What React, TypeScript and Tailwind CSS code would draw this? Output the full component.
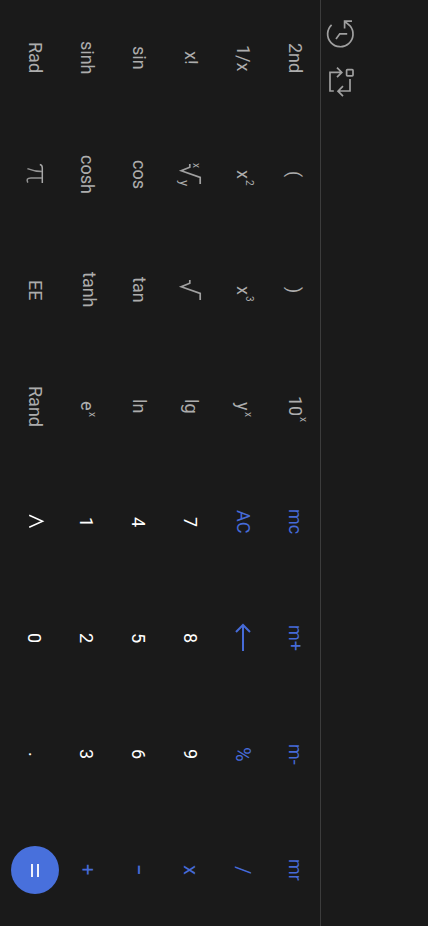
import type { ReactNode } from 'react';

type Tone = 'fn' | 'num' | 'op';

interface KeyDef {
  id: string;
  tone: Tone;
  face: ReactNode;
}

const tones: Record<Tone, string> = {
  fn: 'text-[#adadad]',
  num: 'text-white',
  op: 'text-[#466bd8]',
};

const sideways = 'block whitespace-nowrap [writing-mode:vertical-rl] [text-orientation:sideways]';

function Label({ children, className = 'mr-px text-[18px] leading-6' }: { children: ReactNode; className?: string }) {
  return <span className={`${sideways} ${className}`}>{children}</span>;
}

function Power({ base, exp, place }: { base: string; exp: string; place: string }) {
  return (
    <span className="relative block">
      <Label>{base}</Label>
      <Label className={`absolute top-full text-[10px] leading-[10px] ${place}`}>{exp}</Label>
    </span>
  );
}

function RootMark() {
  return (
    <svg width="52" height="40" viewBox="0 0 52 40" fill="none" stroke="#a0a0a0" strokeWidth="1.7">
      <path d="M24.8 10V13.2L16.2 16.8L35.2 23.4V30" />
    </svg>
  );
}

function Root() {
  return (
    <span className="relative block">
      <RootMark />
      <Label className="absolute left-[26px] top-[9px] text-[10px] leading-[10px]">x</Label>
      <Label className="absolute left-[13px] top-[25.5px] text-[13px] leading-[13px]">y</Label>
    </span>
  );
}

function Pi() {
  return (
    <svg width="52" height="40" viewBox="0 0 52 40" fill="none" strokeWidth="1.5">
      <path d="M30.8 10.6Q33.3 11 33.3 14V29" stroke="#a8a8a8" />
      <path d="M33 17.6C28 17.6 24 16.8 18.4 14.6M33 24H22C18 24 17.4 25.6 18.8 28.6" stroke="#949494" />
    </svg>
  );
}

function Backspace() {
  return (
    <svg width="52" height="40" viewBox="0 0 52 40" fill="none" stroke="#466bd8" strokeWidth="2">
      <path d="M26 33V7M19 14L26 7L33 14" />
    </svg>
  );
}

function Caret() {
  return (
    <svg width="52" height="20" viewBox="0 0 52 20" fill="none" stroke="#fff" strokeWidth="1.5">
      <path d="M20.2 3.2L33.6 9.2L20.2 15.2" />
    </svg>
  );
}

function Equals() {
  return (
    <span className="flex h-12 w-12 items-center justify-center gap-[4px] rounded-full bg-[#4870dc]">
      <span className="h-[13px] w-[2px] bg-[#eef1fb]" />
      <span className="h-[13px] w-[2px] bg-[#eef1fb]" />
    </span>
  );
}

const fn = (s: string, className?: string): KeyDef => ({
  id: s,
  tone: 'fn',
  face: <Label className={className}>{s}</Label>,
});
const num = (s: string, className = 'mr-[2px] text-[18px] leading-6'): KeyDef => ({
  id: s,
  tone: 'num',
  face: <Label className={className}>{s}</Label>,
});
const op = (s: string): KeyDef => ({ id: s, tone: 'op', face: <Label>{s}</Label> });
const sign = (s: string, className = 'text-[20px] leading-6'): KeyDef => ({
  id: `sign ${s}`,
  tone: 'op',
  face: <Label className={className}>{s}</Label>,
});
const pow = (base: string, exp: string, place: string): KeyDef => ({
  id: `${base}^${exp}`,
  tone: 'fn',
  face: <Power base={base} exp={exp} place={place} />,
});

const paren = 'mr-[3px] text-[18px] leading-6';

const keys: KeyDef[] = [
  fn('Rad'), fn('sinh'), fn('sin'), fn('x!'), fn('1/x'), fn('2nd'),
  { id: 'pi', tone: 'fn', face: <Pi /> },
  fn('cosh'), fn('cos'),
  { id: 'root', tone: 'fn', face: <Root /> },
  pow('x', '2', 'left-[13px] mt-[1.5px]'), fn('(', paren),
  fn('EE'), fn('tanh', 'ml-[3px] text-[18px] leading-6'), fn('tan'),
  { id: 'sqrt', tone: 'fn', face: <RootMark /> },
  pow('x', '3', 'left-[13px] mt-[1.5px]'), fn(')', paren),
  fn('Rand'), pow('e', 'x', 'left-[12px] mt-[1px]'), fn('ln'), fn('lg'),
  pow('y', 'x', 'left-[12.5px] mt-[1.5px]'), pow('10', 'x', 'left-[15px] mt-[1px]'),
  { id: 'more', tone: 'num', face: <Caret /> },
  num('1'), num('4'), num('7'), op('AC'), op('mc'),
  num('0'), num('2'), num('5'), num('8'),
  { id: 'back', tone: 'op', face: <Backspace /> },
  op('m+'),
  num('.', 'text-[18px] leading-6'), num('3'), num('6'), num('9'), sign('%'), op('m-'),
  { id: 'eq', tone: 'num', face: <Equals /> },
  sign('+', 'ml-[2px] text-[20px] leading-6'),
  sign('−', 'mr-px text-[20px] font-medium leading-6'),
  sign('x', 'mr-px text-[20px] leading-6'),
  sign('/'), op('mr'),
];

function HistoryIcon() {
  return (
    <svg width="32" height="32" viewBox="0 0 32 32" fill="none" stroke="#a0a0a0" strokeWidth="1.7">
      <path d="M7.6 6.8A12.7 12.7 0 1 0 26 7.8L20.8 3.4M20.6 10.5V3.2H28M12 21L15.8 15.8H23.2" />
    </svg>
  );
}

function RotateIcon() {
  return (
    <svg width="32" height="32" viewBox="0 0 32 32" fill="none" stroke="#a0a0a0" strokeWidth="1.7">
      <path d="M9.8 25H6V6.3H17.8M13 1.6L17.8 6.4L13 11.2M26 13V25H13.8M19 20.2L14 25.2L19 30.2" />
      <rect x="22.6" y="3.6" width="6.4" height="6.2" rx="0.8" />
    </svg>
  );
}

export default function App() {
  return (
    <main className="flex h-[926px] w-[428px] overflow-hidden bg-[#1a1a1a] font-[Roboto,sans-serif]">
      <section className="h-full w-[321px] shrink-0 overflow-hidden border-r border-[#3c3c3c] pl-[9px]">
        <div className="grid w-[312px] grid-cols-[repeat(6,52px)] auto-rows-[116px]">
          {keys.map((k) => (
            <button key={k.id} type="button" className={`flex items-center justify-center ${tones[k.tone]}`}>
              {k.face}
            </button>
          ))}
        </div>
      </section>
      <aside className="flex flex-1 flex-col items-start gap-4 pl-[3px] pt-[18px]">
        <HistoryIcon />
        <RotateIcon />
      </aside>
    </main>
  );
}
